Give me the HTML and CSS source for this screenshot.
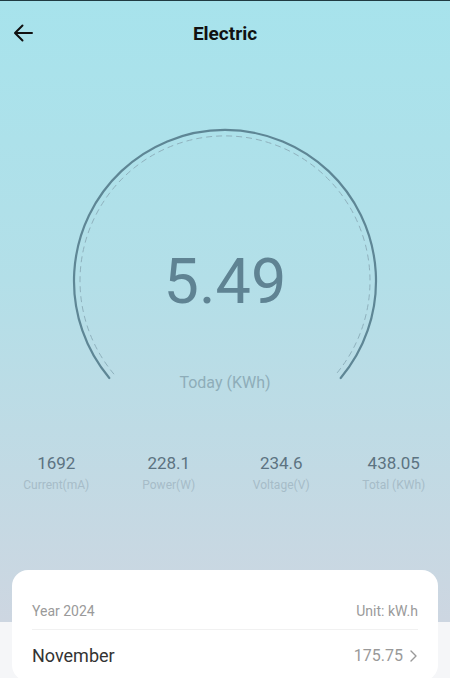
FILE: index.html
```html
<!DOCTYPE html>
<html lang="en">
<head>
  <meta charset="UTF-8" />
  <title>Electric</title>
  <link rel="stylesheet" href="styles.css">
</head>
<body>
  <div class="screen">
    <div class="top">
      <header class="header">
        <button class="back" aria-label="Back">
          <svg width="22" height="22" viewBox="0 0 22 22"><path d="M20 11H3.5M10.5 3.5L3 11L10.5 18.5" fill="none" stroke="#111" stroke-width="2" stroke-linecap="round" stroke-linejoin="round"/></svg>
        </button>
        <h1>Electric</h1>
      </header>

      <div class="gauge">
        <svg width="320" height="280" viewBox="0 0 320 280">
          <!-- outer ring, 260 degrees -->
          <path d="M44.3 258 A151 151 0 1 1 275.7 258" fill="none" stroke="#5e8695" stroke-width="2.2" stroke-linecap="round"/>
          <path d="M49 254.2 A145 145 0 1 1 271 254.2" fill="none" stroke="#8fb1bd" stroke-width="1" stroke-dasharray="6 4"/>
          <text class="gauge-value" x="160" y="183" text-anchor="middle">5.49</text>
          <text class="gauge-label" x="160" y="268" text-anchor="middle">Today (KWh)</text>
        </svg>
      </div>

      <div class="stats">
        <div class="stat"><div class="stat-value">1692</div><div class="stat-label">Current(mA)</div></div>
        <div class="stat"><div class="stat-value">228.1</div><div class="stat-label">Power(W)</div></div>
        <div class="stat"><div class="stat-value">234.6</div><div class="stat-label">Voltage(V)</div></div>
        <div class="stat"><div class="stat-value">438.05</div><div class="stat-label">Total (KWh)</div></div>
      </div>
    </div>

    <div class="card">
      <div class="card-head">
        <span>Year 2024</span>
        <span>Unit: kW.h</span>
      </div>
      <div class="month-row">
        <span class="month">November</span>
        <span class="month-total">175.75
          <svg width="10" height="14" viewBox="0 0 10 14"><path d="M3 2L8 7L3 12" fill="none" stroke="#999" stroke-width="1.4" stroke-linecap="round" stroke-linejoin="round"/></svg>
        </span>
      </div>
    </div>
  </div>
</body>
</html>
```

FILE: styles.css
```css
* {
  box-sizing: border-box;
}
html, body {
  margin: 0;
  height: 100%;
}
body {
  font-family: Roboto, "Noto Sans", sans-serif;
  background: #f5f6f8;
  overflow: hidden;
}
.screen {
  border-top: 1px solid #1f3b42;
}
.top {
  background: linear-gradient(180deg, #a7e3ec 0%, #b3dfe8 45%, #cdd6e1 100%);
  height: 621px;
}
.header {
  height: 66px;
  display: flex;
  align-items: center;
  justify-content: center;
  position: relative;
}
.back {
  position: absolute;
  left: 12px;
  top: 21px;
  padding: 0;
  border: none;
  background: none;
  width: 22px;
  height: 22px;
}
.header h1 {
  margin: 0 0 2px;
  font-size: 19px;
  font-weight: bold;
  color: #111;
}
.gauge {
  display: flex;
  justify-content: center;
  padding-top: 53px;
}
.gauge-value {
  font-size: 63px;
  fill: #5f8393;
}
.gauge-label {
  font-size: 16px;
  fill: #8eadb9;
}
.stats {
  display: grid;
  grid-template-columns: repeat(4, 1fr);
  margin-top: 53px;
  text-align: center;
}
.stat-value {
  font-size: 17px;
  color: #5c7381;
}
.stat-label {
  font-size: 12px;
  color: #a6bcc8;
  margin-top: 5px;
}
.card {
  position: relative;
  margin: -52px 12px 0;
  background: #fff;
  border-radius: 16px;
  padding: 33px 20px 0;
}
.card-head {
  display: flex;
  justify-content: space-between;
  font-size: 14px;
  color: #9a9a9a;
  padding-bottom: 10px;
  border-bottom: 1px solid #f1f1f1;
}
.month-row {
  display: flex;
  justify-content: space-between;
  align-items: center;
  padding: 15px 0;
}
.month {
  font-size: 18px;
  color: #333;
}
.month-total {
  font-size: 16px;
  color: #999;
  display: flex;
  align-items: center;
  gap: 5px;
}
```
